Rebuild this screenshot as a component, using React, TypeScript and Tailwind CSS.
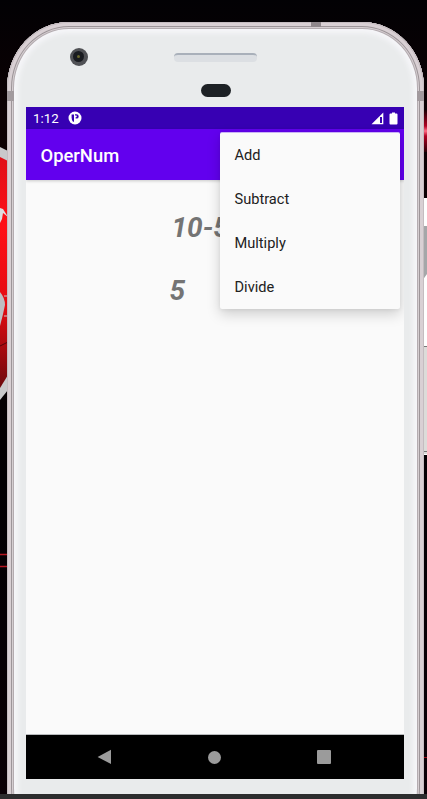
const menuItems = ['Add', 'Subtract', 'Multiply', 'Divide'];

function Wallpaper() {
  return (
    <svg className="absolute inset-0" width="427" height="799" viewBox="0 0 427 799" aria-hidden="true">
      <defs>
        <linearGradient id="night" x1="0" y1="0" x2="0" y2="1">
          <stop offset="0" stopColor="#020104" />
          <stop offset="0.15" stopColor="#0d0103" />
          <stop offset="0.6" stopColor="#030003" />
          <stop offset="1" stopColor="#0a0005" />
        </linearGradient>
        <linearGradient id="red" x1="0" y1="0" x2="0" y2="1">
          <stop offset="0" stopColor="#e01018" />
          <stop offset="0.3" stopColor="#ff0f16" />
          <stop offset="0.65" stopColor="#e30b12" />
          <stop offset="1" stopColor="#6d080c" />
        </linearGradient>
        <linearGradient id="beam" x1="0" y1="0" x2="0" y2="1">
          <stop offset="0" stopColor="#1a0004" />
          <stop offset="0.38" stopColor="#b00022" />
          <stop offset="0.5" stopColor="#ff6d86" />
          <stop offset="0.62" stopColor="#b00022" />
          <stop offset="1" stopColor="#2a0006" />
        </linearGradient>
      </defs>
      <rect width="427" height="799" fill="url(#night)" />
      <path d="M0 147L8 151V390L0 400Z" fill="#c9c9cb" />
      <path d="M0 157L8 161V375L0 388Z" fill="url(#red)" />
      <path d="M0 208L3 209L8 217L3 213L2 219L0 223Z" fill="#dedee0" />
      <path d="M0 292Q5 298 5 305Q3 315 0 326Z" fill="#bebec2" />
      <path d="M4 296H8M4 316H8" stroke="#c9c9cb" />
      <path d="M0 346L8 342" stroke="#550508" />
      <path d="M0 554.5H8M0 566.5H8" stroke="#b31620" strokeWidth="1.3" />
      <rect x="422" y="110" width="5" height="42" fill="url(#beam)" />
      <path d="M422 198H427V455H422Z" fill="#fff" />
      <path d="M422 226H427V274L422 281Z" fill="#a5a7a9" />
      <path d="M422 346H427V454H422Z" fill="#dcdcd9" />
      <path d="M422 346.5H427M422 451.5H427" stroke="#777" />
      <path d="M424 757.5H427" stroke="#a00c16" />
    </svg>
  );
}

function StatusBar() {
  return (
    <div className="flex h-[22px] items-center justify-between bg-[#3700b3] pl-[7px] pr-[6px] text-white">
      <div className="flex items-center">
        <span className="w-[35px] pt-px text-[13.3px] leading-none">1:12</span>
        <svg width="14" height="14" viewBox="0 0 14 14">
          <circle cx="7" cy="7" r="6.5" fill="#fff" />
          <path d="M3.6 3.6H6V10.8H5Q3.6 9 3.6 6.5Z" fill="#3700b3" />
          <path d="M7 3.2H8.5A2.2 2.2 0 0 1 8.5 7.6H7.6V6.2H8.2A.9 .9 0 0 0 8.2 4.5H7Z" fill="#3700b3" />
        </svg>
      </div>
      <div className="flex items-center gap-[5px]">
        <svg width="13" height="13" viewBox="0 0 13 13">
          <path d="M12.3 .5V12.3H.5Z" fill="#fff" />
          <path d="M9 5H11V11H9Z" fill="#3700b3" />
        </svg>
        <svg width="9" height="13" viewBox="0 0 9 13">
          <path d="M3 .5H6V1.5H7.5Q8.5 1.5 8.5 2.5V11.5Q8.5 12.5 7.5 12.5H1.5Q.5 12.5 .5 11.5V2.5Q.5 1.5 1.5 1.5H3Z" fill="#fff" />
        </svg>
      </div>
    </div>
  );
}

function OverflowMenu() {
  return (
    <ul className="absolute left-[194px] top-[25px] h-[177px] w-[180px] rounded-[2px] border-t border-[#c9b3f5] bg-[#fafafa] shadow-[0_5px_14px_rgba(0,0,0,0.18),0_1px_4px_rgba(0,0,0,0.06)]">
      {menuItems.map((item) => (
        <li key={item} className="flex h-11 items-center pl-[14.5px] pt-[2px] text-[14.6px] text-[#212121]">
          {item}
        </li>
      ))}
    </ul>
  );
}

function NavigationBar() {
  return (
    <div className="flex h-[45px] items-center justify-between border-t border-[#b8babc] bg-black pl-[71px] pr-[73px]">
      <svg width="14" height="16" viewBox="0 0 14 16">
        <path d="M14 .8V15L.6 7.9Z" fill="#9b9b9b" />
      </svg>
      <div className="ml-px size-[13px] rounded-full bg-[#9b9b9b]" />
      <div className="size-[14px] rounded-[1px] bg-[#9b9b9b]" />
    </div>
  );
}

export default function App() {
  return (
    <div className="relative h-[799px] w-[427px] overflow-hidden bg-black font-[Roboto,sans-serif]">
      <Wallpaper />
      <div className="relative ml-[7px] h-[794px] w-[417px] pt-[22px]">
        <div className="relative h-[832px] rounded-[62px/66px] bg-[#e9ebec] px-[19px] shadow-[inset_0_0_0_1px_#c5bcc0,inset_0_0_0_4px_#d9d0d4,inset_0_0_0_5px_#9d9599,inset_0_0_0_6px_#d5ced1,inset_0_0_0_7px_#b4acb0,inset_0_0_5px_11px_#f6f6f9]">
          <div className="absolute left-[304px] top-0 h-[5px] w-[10px] bg-[#8f878b]" />
          <div className="absolute left-0 top-[69px] h-[10px] w-[7px] bg-[#a29a9e]" />
          <div className="absolute right-0 top-[69px] h-[10px] w-[7px] bg-[#a29a9e]" />
          <div className="flex h-[85px] pt-[26px]">
            <div className="ml-[44px] flex size-[17.5px] items-center justify-center rounded-full bg-[#505155]">
              <div className="flex size-[11px] items-center justify-center rounded-full bg-[#191b20]">
                <div className="size-[3px] rounded-full bg-[#69672e]" />
              </div>
            </div>
            <div className="ml-[86.5px] flex w-[83px] flex-col items-center pt-[5px]">
              <div className="h-[9px] w-full rounded-[4px] border-t-2 border-[#a9b0ba] bg-[#dcdfe3]" />
              <div className="mt-[22px] h-[13px] w-[30px] rounded-full bg-[#1d2125]" />
            </div>
          </div>
          <div className="relative flex h-[672px] w-[378px] flex-col overflow-hidden bg-[#fafafa]">
            <StatusBar />
            <div className="flex h-[51px] shrink-0 items-center bg-[#6200ee] pl-[14.5px] pt-[2px] text-[18.4px] font-medium text-white shadow-[0_1px_3px_rgba(0,0,0,0.2)]">
              OperNum
            </div>
            <main className="flex-1 pt-[32px] text-[28px] font-bold italic leading-8 text-[#747474]">
              <div className="pl-[145.5px]">10-5</div>
              <div className="mt-[31px] pl-[143.5px]">5</div>
            </main>
            <NavigationBar />
            <OverflowMenu />
          </div>
        </div>
      </div>
      <div className="relative h-[5px] bg-[#2c2d2e]" />
    </div>
  );
}
